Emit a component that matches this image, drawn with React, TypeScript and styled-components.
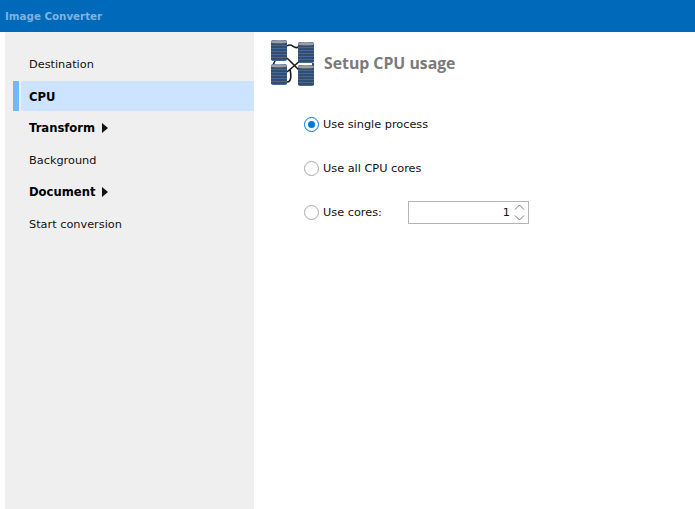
import React from 'react'
import styled, { createGlobalStyle } from 'styled-components'

const GlobalStyle = createGlobalStyle`
  html, body {
    margin: 0;
    height: 100%;
    background: #fff;
    overflow: hidden;
  }

  #root {
    height: 100%;
  }
`

const Window = styled.div`
  display: flex;
  flex-direction: column;
  width: 695px;
  height: 509px;
  font-family: 'DejaVu Sans', Verdana, sans-serif;
  font-size: 11.3px;
  color: #111;
`

const TitleBar = styled.header`
  flex: 0 0 32px;
  display: flex;
  align-items: center;
  padding: 0 5px 0;
  background: #0069ba;
  color: #7fb2dc;
  font-size: 10.3px;
  font-weight: 700;
`

const Body = styled.div`
  flex: 1;
  display: flex;
  padding-left: 5px;
`

const Sidebar = styled.nav`
  flex: 0 0 249px;
  display: flex;
  flex-direction: column;
  padding-top: 16px;
  background: #efefef;
`

const MenuRow = styled.div<{ $active?: boolean; $strong?: boolean }>`
  box-sizing: border-box;
  display: flex;
  align-items: center;
  gap: 7px;
  height: ${p => (p.$active ? 30 : 32)}px;
  margin: ${p => (p.$active ? '1px 0 1px 16px' : '0')};
  padding: ${p => (p.$active ? '2px 0 0 8px' : '0 0 0 24px')};
  background: ${p => (p.$active ? '#cce4ff' : 'transparent')};
  font-size: ${p => (p.$strong || p.$active ? 11.6 : 11.3)}px;
  font-weight: ${p => (p.$strong || p.$active ? 700 : 400)};
  color: ${p => (p.$strong || p.$active ? '#000' : '#111')};
  position: relative;

  ${p =>
    p.$active &&
    `
    &::before {
      content: '';
      position: absolute;
      left: -8px;
      top: 0;
      bottom: 0;
      width: 6px;
      background: #70b8ff;
    }
  `}
`

const Arrow = styled.span`
  width: 0;
  height: 0;
  border-top: 5px solid transparent;
  border-bottom: 5px solid transparent;
  border-left: 6px solid #111;
`

const Content = styled.main`
  flex: 1;
  display: flex;
  flex-direction: column;
  padding: 7px 0 0 16px;
`

const Heading = styled.div`
  display: flex;
  align-items: center;
  gap: 8px;
  height: 48px;
`

const HeadingText = styled.h1`
  margin: 0;
  font-family: 'Open Sans', 'DejaVu Sans', sans-serif;
  font-size: 15.8px;
  font-weight: 700;
  color: #7a7a7a;
`

const Options = styled.div`
  display: flex;
  flex-direction: column;
  gap: 22px;
  margin: 26px 0 0 34px;
`

const OptionRow = styled.label`
  display: flex;
  align-items: center;
  height: 22px;
`

const Radio = styled.span<{ $checked?: boolean }>`
  box-sizing: border-box;
  flex: none;
  display: flex;
  align-items: center;
  justify-content: center;
  width: 15px;
  height: 15px;
  margin-right: 4px;
  border-radius: 50%;
  border: 1px solid ${p => (p.$checked ? '#0078d7' : '#a9a9a9')};
  background: #fff;

  &::after {
    content: '';
    display: ${p => (p.$checked ? 'block' : 'none')};
    width: 7px;
    height: 7px;
    border-radius: 50%;
    background: #0078d7;
  }
`

const Spinner = styled.div`
  box-sizing: border-box;
  display: flex;
  align-items: center;
  justify-content: flex-end;
  gap: 3px;
  width: 121px;
  height: 23px;
  margin-left: 26px;
  padding-right: 2px;
  border: 1px solid #b4b4b4;
`

const SpinButtons = styled.svg`
  display: block;
`

function ClusterIcon() {
  const stacks = [
    { x: 1, y: 2 },
    { x: 28, y: 4 },
    { x: 1, y: 26 },
    { x: 28, y: 27 },
  ]
  const bands = [4, 7, 10, 13, 16, 19]

  return (
    <svg width="46" height="50" viewBox="0 0 46 50">
      <defs>
        <filter id="soft" x="-5%" y="-5%" width="110%" height="110%">
          <feGaussianBlur stdDeviation="0.35" />
        </filter>
      </defs>
      <g filter="url(#soft)">
        <path
          d="M17 8 C22 4 24 12 28 9 M17 34 L31 22 M17 20 L31 34 M5 23 L3 27 M43 25 L43 29 M17 44 C22 44 21 36 20 31"
          fill="none"
          stroke="#1a1a1a"
          strokeWidth="1.6"
        />
        {stacks.map(s => (
          <g key={`${s.x}-${s.y}`}>
            <rect x={s.x} y={s.y} width="16" height="21" rx="2" fill="#3f6a9c" />
            <ellipse cx={s.x + 8} cy={s.y + 2} rx="8" ry="2" fill="#9a9ea4" />
            {bands.map(b => (
              <path key={b} d={`M${s.x} ${s.y + b}h16`} stroke="#2b3038" strokeWidth="1" />
            ))}
          </g>
        ))}
      </g>
    </svg>
  )
}

function App() {
  return (
    <>
      <GlobalStyle />
      <Window>
        <TitleBar>Image Converter</TitleBar>
        <Body>
          <Sidebar>
            <MenuRow>Destination</MenuRow>
            <MenuRow $active>CPU</MenuRow>
            <MenuRow $strong>
              Transform <Arrow />
            </MenuRow>
            <MenuRow>Background</MenuRow>
            <MenuRow $strong>
              Document <Arrow />
            </MenuRow>
            <MenuRow>Start conversion</MenuRow>
          </Sidebar>
          <Content>
            <Heading>
              <ClusterIcon />
              <HeadingText>Setup CPU usage</HeadingText>
            </Heading>
            <Options>
              <OptionRow>
                <Radio $checked />
                Use single process
              </OptionRow>
              <OptionRow>
                <Radio />
                Use all CPU cores
              </OptionRow>
              <OptionRow>
                <Radio />
                Use cores:
                <Spinner>
                  1
                  <SpinButtons width="13" height="21" viewBox="0 0 13 21">
                    <path d="M2 7.5l4.5-4.5L11 7.5M2 13.5l4.5 4.5L11 13.5" fill="none" stroke="#7a7a7a" />
                  </SpinButtons>
                </Spinner>
              </OptionRow>
            </Options>
          </Content>
        </Body>
      </Window>
    </>
  )
}

export default App
